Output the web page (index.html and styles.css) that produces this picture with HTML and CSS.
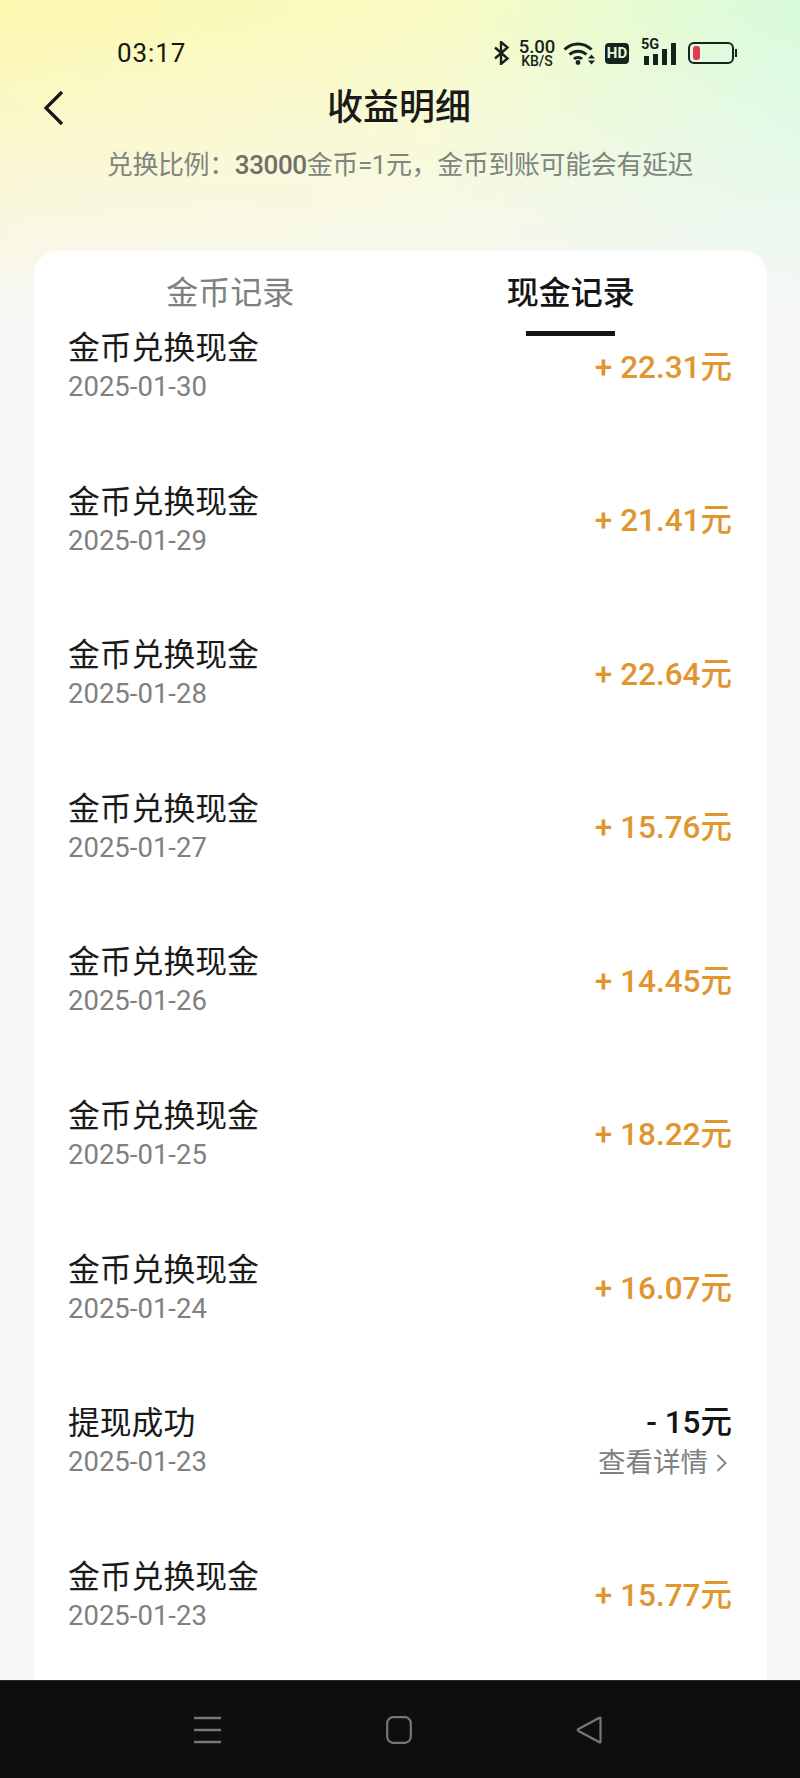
FILE: index.html
```html
<!doctype html>
<html>
<head>
    <meta charset="UTF-8">
    <title>收益明细</title>
    <link rel="stylesheet" href="styles.css">
</head>
<body>
<div class="phone">
    <div class="status-bar">
        <span class="time">03:17</span>
        <div class="status-icons">
            <svg class="ic-bt" width="17" height="24" viewBox="0 0 17 24"><path d="M2 6.500 14.500 17.500 8 23V1L14.500 6.500 2 17.500" fill="none" stroke="#14241c" stroke-width="2.400"/></svg>
            <div class="speed"><span class="speed-num">5.00</span><span class="speed-unit">KB/S</span></div>
            <svg class="ic-wifi" width="33" height="24" viewBox="0 0 33 24"><g fill="none" stroke="#14241c" stroke-width="3"><path d="M1.500 8.500C9 1 21 1 28.500 8.500"/><path d="M6.500 13.500C11 9 19 9 23.500 13.500"/><path d="M11 18C13 16 17 16 19 18"/></g><circle cx="15" cy="21.500" r="2.400" fill="#14241c"/><path d="M25 17.500 28.500 13.500 32 17.500ZM25 19.500H32L28.500 23.500Z" fill="#14241c"/></svg>
            <div class="hd">HD</div>
            <div class="signal">
                <span class="five-g">5G</span>
                <div class="bars"><i class="b1"></i><i class="b2"></i><i class="b3"></i><i class="b4"></i></div>
            </div>
            <div class="battery"><div class="battery-body"><i></i></div><div class="battery-tip"></div></div>
        </div>
    </div>
    <div class="title-bar">
        <svg class="back" width="21" height="36" viewBox="0 0 21 36"><path d="M19 2 3 18 19 34" fill="none" stroke="#151515" stroke-width="3.200"/></svg>
        <h1>收益明细</h1>
    </div>
    <p class="sub">兑换比例：<b>33000</b>金币=1元，金币到账可能会有延迟</p>

    <div class="card">
        <div class="tabs">
            <div class="tab">金币记录</div>
            <div class="tab active">现金记录</div>
        </div>
        <ul class="list">
            <li class="row">
                <div class="left"><div class="name">金币兑换现金</div><div class="date">2025-01-30</div></div>
                <div class="right"><div class="amount">+ 22.31元</div></div>
            </li>
            <li class="row">
                <div class="left"><div class="name">金币兑换现金</div><div class="date">2025-01-29</div></div>
                <div class="right"><div class="amount">+ 21.41元</div></div>
            </li>
            <li class="row">
                <div class="left"><div class="name">金币兑换现金</div><div class="date">2025-01-28</div></div>
                <div class="right"><div class="amount">+ 22.64元</div></div>
            </li>
            <li class="row">
                <div class="left"><div class="name">金币兑换现金</div><div class="date">2025-01-27</div></div>
                <div class="right"><div class="amount">+ 15.76元</div></div>
            </li>
            <li class="row">
                <div class="left"><div class="name">金币兑换现金</div><div class="date">2025-01-26</div></div>
                <div class="right"><div class="amount">+ 14.45元</div></div>
            </li>
            <li class="row">
                <div class="left"><div class="name">金币兑换现金</div><div class="date">2025-01-25</div></div>
                <div class="right"><div class="amount">+ 18.22元</div></div>
            </li>
            <li class="row">
                <div class="left"><div class="name">金币兑换现金</div><div class="date">2025-01-24</div></div>
                <div class="right"><div class="amount">+ 16.07元</div></div>
            </li>
            <li class="row">
                <div class="left"><div class="name">提现成功</div><div class="date">2025-01-23</div></div>
                <div class="right">
                    <div class="amount minus">- 15元</div>
                    <div class="detail">查看详情<svg width="11" height="20" viewBox="0 0 11 20"><path d="M1.500 2 9.500 10 1.500 18" fill="none" stroke="#808080" stroke-width="1.800"/></svg></div>
                </div>
            </li>
            <li class="row">
                <div class="left"><div class="name">金币兑换现金</div><div class="date">2025-01-23</div></div>
                <div class="right"><div class="amount">+ 15.77元</div></div>
            </li>
        </ul>
    </div>

    <div class="nav-bar">
        <svg width="28" height="28" viewBox="0 0 28 28"><path d="M1 2H28M1 14H28M1 26H28" stroke="#77777a" stroke-width="2.600"/></svg>
        <svg width="26" height="28" viewBox="0 0 26 28"><rect x="1.200" y="1.200" width="23.600" height="25.600" rx="6" fill="none" stroke="#77777a" stroke-width="2.200"/></svg>
        <svg width="26" height="28" viewBox="0 0 26 28"><path d="M24.500 2.500V25.500Q24.500 27 23 26L2.500 15Q1 14 2.500 13L23 2Q24.500 1 24.500 2.500Z" fill="none" stroke="#77777a" stroke-width="2.200"/></svg>
    </div>
</div>
</body>
</html>
```

FILE: styles.css
```css
* {
    margin: 0;
    padding: 0;
    box-sizing: border-box;
}
body {
    width: 800px;
    height: 1778px;
    overflow: hidden;
    font-family: Roboto, "Noto Sans CJK SC", sans-serif;
}
.phone {
    width: 800px;
    height: 1778px;
    display: flex;
    flex-direction: column;
    background:
        linear-gradient(180deg, rgba(247, 247, 248, 0) 15px, #f7f7f8 330px),
        linear-gradient(100deg, #fdf8b0 0%, #f9fbc4 40%, #dafbdc 70%, #c4fbe0 100%);
}

/* status bar */
.status-bar {
    height: 84px;
    padding: 38px 63px 0 117px;
    display: flex;
    justify-content: space-between;
    align-items: flex-start;
}
.time {
    font-size: 26px;
    line-height: 30px;
    font-weight: 400;
    color: #151a16;
    letter-spacing: 0.9px;
}
.status-icons {
    display: flex;
    align-items: center;
    height: 30px;
    color: #14241c;
}
.ic-bt {
    margin-right: 8px;
}
.speed {
    display: flex;
    flex-direction: column;
    align-items: center;
    width: 38px;
    margin-right: 7px;
    font-weight: 500;
}
.speed-num {
    font-size: 18.5px;
    line-height: 15px;
}
.speed-unit {
    font-size: 14px;
    line-height: 12px;
}
.ic-wifi {
    margin-right: 9px;
}
.hd {
    width: 24px;
    height: 21px;
    background: #14241c;
    color: #e3fbdc;
    border-radius: 4px;
    font-size: 15px;
    line-height: 21px;
    font-weight: 700;
    text-align: center;
    margin-right: 12px;
}
.signal {
    position: relative;
    width: 35px;
    height: 24px;
    margin-right: 12px;
}
.five-g {
    position: absolute;
    left: 0;
    top: -3px;
    font-size: 14.5px;
    line-height: 14px;
    font-weight: 700;
}
.bars {
    height: 22px;
    margin-top: 2px;
    padding-left: 3px;
    display: flex;
    align-items: flex-end;
    gap: 4px;
}
.bars i {
    width: 5px;
    background: #14241c;
}
.bars .b1 {
    height: 9px;
}
.bars .b2 {
    height: 11px;
}
.bars .b3 {
    height: 16px;
}
.bars .b4 {
    height: 22px;
}
.battery {
    display: flex;
    align-items: center;
}
.battery-body {
    width: 46px;
    height: 22px;
    border: 2px solid #14241c;
    border-radius: 6px;
    padding: 2px 3px;
}
.battery-body i {
    display: block;
    width: 7px;
    height: 14px;
    background: #df3b50;
    border-radius: 3px;
}
.battery-tip {
    width: 2px;
    height: 8px;
    background: #14241c;
    margin-left: 1px;
}

/* title */
.title-bar {
    position: relative;
    height: 48px;
    text-align: center;
}
.back {
    position: absolute;
    left: 43px;
    top: 6px;
}
h1 {
    font-size: 36px;
    line-height: 48px;
    font-weight: 500;
    color: #1a1a1a;
    padding-right: 2px;
}
.sub {
    margin-top: 15px;
    font-size: 26px;
    line-height: 36px;
    text-align: center;
    color: #808580;
    letter-spacing: -0.4px;
}
.sub b {
    font-weight: 500;
    color: #6d6f68;
}

/* card */
.card {
    flex: 1;
    min-height: 0;
    margin: 68px 33px 0 34px;
    background: #fff;
    border-radius: 24px 24px 0 0;
    overflow: hidden;
    display: flex;
    flex-direction: column;
}
.tabs {
    flex: none;
    height: 85px;
    display: flex;
    background: #fff;
}
.tab {
    position: relative;
    width: 50%;
    padding: 19px 0 0 26px;
    text-align: center;
    font-size: 32px;
    line-height: 46px;
    color: #808080;
}
.tab.active {
    padding: 19px 26px 0 0;
    font-weight: 500;
    color: #151515;
}
.tab.active::after {
    content: "";
    position: absolute;
    left: 125px;
    bottom: 0;
    width: 89px;
    height: 5px;
    background: #151515;
}
.list {
    list-style: none;
    padding: 0 35px 0 34px;
}
.row {
    height: 153.6px;
    display: flex;
    justify-content: space-between;
}
.left, .right {
    height: 63px;
    display: flex;
    flex-direction: column;
}
.right {
    align-items: flex-end;
    justify-content: center;
}
.name {
    font-size: 31.8px;
    line-height: 24px;
    color: #1a1a1a;
}
.date {
    margin-top: 15px;
    font-size: 27.5px;
    line-height: 24px;
    color: #808080;
}
.amount {
    font-size: 31.5px;
    line-height: 36px;
    font-weight: 500;
    color: #e0952f;
}
.amount.minus {
    color: #151515;
    line-height: 24px;
}
.detail {
    margin-top: 16px;
    display: flex;
    align-items: center;
    gap: 8px;
    padding-right: 5px;
    font-size: 27.5px;
    line-height: 24px;
    color: #808080;
}

/* bottom nav */
.nav-bar {
    flex: none;
    height: 98px;
    background: #0e0e10;
    border-top: 1px solid #2a2a2c;
    display: flex;
    padding: 35px 0 0 193px;
    gap: 0 164.5px;
    align-items: flex-start;
}
```
